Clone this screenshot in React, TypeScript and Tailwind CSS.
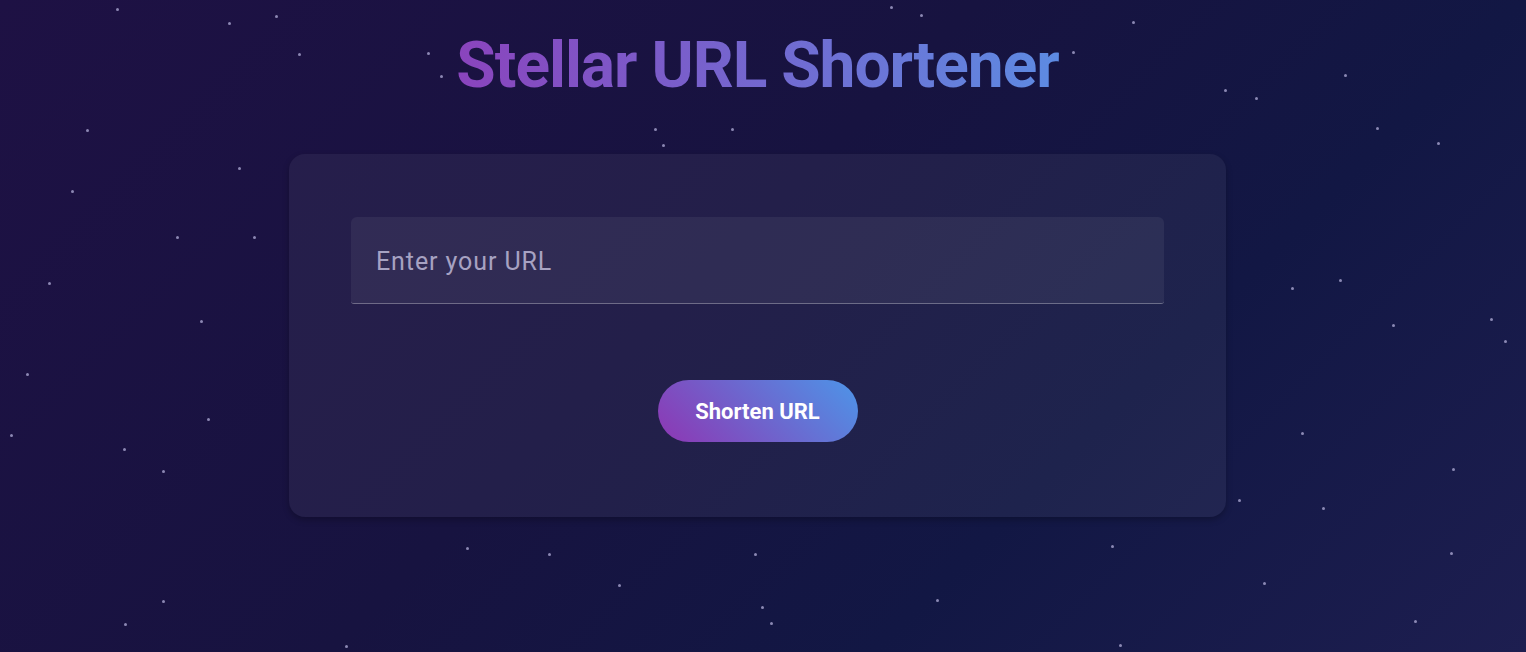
import React from 'react';

const stars: [number, number][] = [
  [117, 9], [229, 23], [276, 16], [299, 54], [87, 130], [72, 191], [239, 168], [177, 237],
  [254, 237], [49, 283], [201, 321], [27, 374], [208, 419], [11, 435], [124, 449], [163, 471],
  [891, 7], [921, 15], [1133, 22], [1073, 52], [1345, 75], [1225, 90], [1256, 98], [1377, 128],
  [1438, 143], [655, 129], [732, 129], [663, 145], [441, 76], [428, 53], [1292, 288], [1340, 280],
  [1393, 325], [1491, 319], [1505, 341], [1302, 433], [1453, 469], [1239, 500], [1323, 508],
  [467, 548], [549, 554], [755, 554], [1112, 546], [1451, 553], [619, 585], [1264, 583],
  [163, 601], [937, 600], [762, 607], [771, 623], [125, 624], [346, 646], [1120, 645], [1415, 621],
];

export default function App() {
  return (
    <div
      className="relative min-h-[652px] w-full overflow-hidden bg-[linear-gradient(135deg,#1e1144_0%,#171340_45%,#121744_70%,#1d1e50_100%)]"
      style={{ fontFamily: 'Roboto, "Liberation Sans", sans-serif' }}
    >
      {stars.map(([x, y], i) => (
        <span
          key={i}
          className="absolute h-[3px] w-[3px] rounded-full bg-[#a9a5cf]/80"
          style={{ left: x - 1, top: y - 1 }}
        />
      ))}

      <div className="relative flex flex-col items-center pt-[28px] pr-[11px]">
        <h1 className="bg-[linear-gradient(90deg,#8a44bd,#5d8be2)] bg-clip-text text-[64px] font-bold leading-[76px] tracking-[-1px] text-transparent">
          Stellar URL Shortener
        </h1>

        <div className="mt-[50px] w-[937px] rounded-2xl bg-white/[0.05] px-[62px] pt-[63px] pb-[75px] shadow-[0_3px_6px_rgba(0,0,0,0.25)]">
          <div className="flex h-[87px] items-center rounded-t-md rounded-b-[3px] border-b border-white/30 bg-white/[0.06] px-[25px] pt-[3px]">
            <input
              placeholder="Enter your URL"
              className="w-full bg-transparent text-[25px] tracking-[0.9px] text-white outline-none placeholder:text-[#a7a2c2]"
            />
          </div>

          <div className="mt-[76px] flex justify-center">
            <button className="h-[62px] w-[200px] rounded-full bg-[linear-gradient(45deg,#8e36b3,#4d95e8)] text-[22px] font-bold text-white">
              Shorten URL
            </button>
          </div>
        </div>
      </div>
    </div>
  );
}
